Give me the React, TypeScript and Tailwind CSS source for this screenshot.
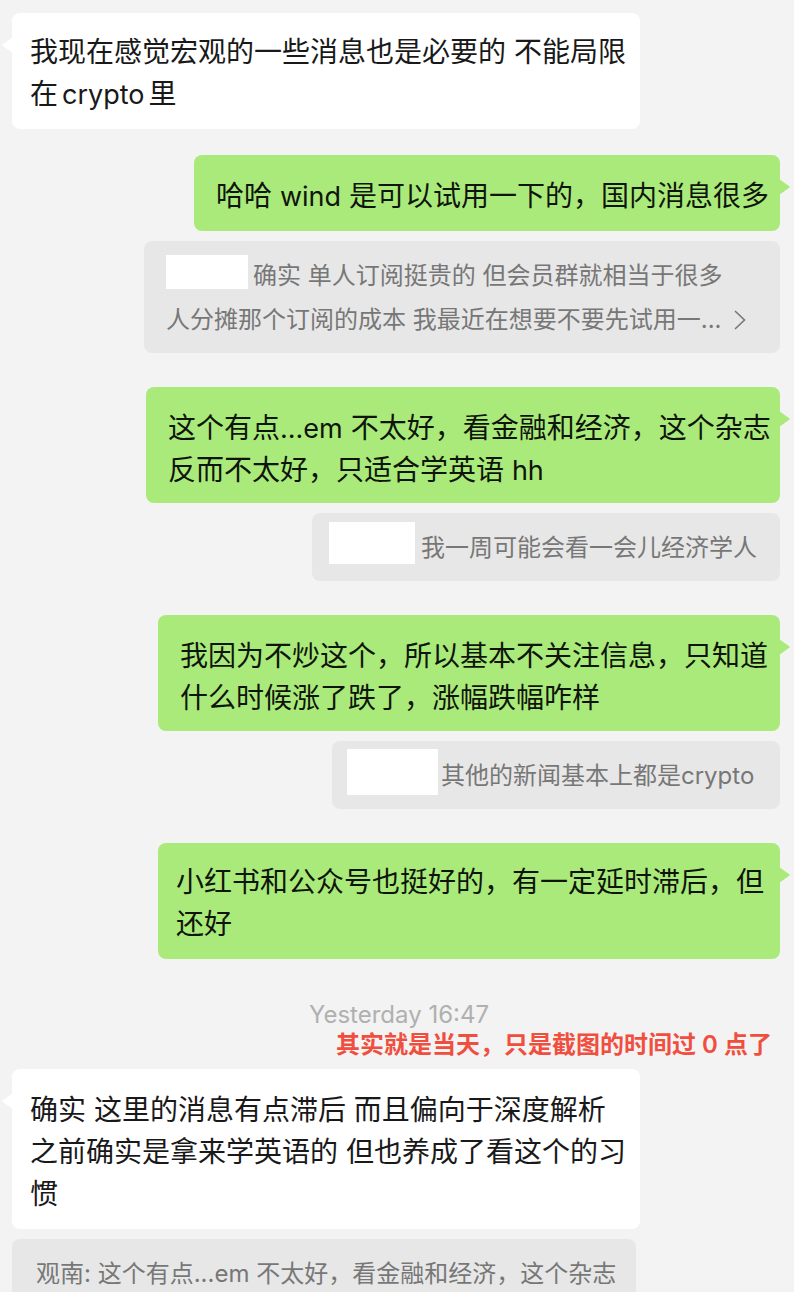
import type { ReactNode } from "react";

function Tail({ side }: { side: "left" | "right" }) {
  return side === "left" ? (
    <svg className="absolute top-6 -left-[10px] h-4 w-[11px] fill-white" viewBox="0 0 11 16" aria-hidden="true">
      <path d="M11 0 0.4 7.5Q0 8 0.4 8.5L11 16Z" />
    </svg>
  ) : (
    <svg className="absolute top-6 -right-[10px] h-4 w-[11px] fill-[#aaea7b]" viewBox="0 0 11 16" aria-hidden="true">
      <path d="M0 0 10.6 7.5Q11 8 10.6 8.5L0 16Z" />
    </svg>
  );
}

/* Latin words sit slightly smaller than the Chinese text around them. */
function Latin({ className = "", children }: { className?: string; children: ReactNode }) {
  return <span className={`text-[27px] leading-none ${className}`}>{children}</span>;
}

function Incoming({ className, lines }: { className: string; lines: ReactNode[] }) {
  return (
    <div className={`relative w-[628px] max-w-full rounded-lg bg-white pl-[18px] text-[28px] leading-[42px] text-[#191919] ${className}`}>
      <Tail side="left" />
      {lines.map((line, i) => (
        <p key={i} className="whitespace-nowrap">{line}</p>
      ))}
    </div>
  );
}

function Outgoing({ className, lines }: { className: string; lines: ReactNode[] }) {
  return (
    <div className={`relative ml-auto max-w-full rounded-lg bg-[#aaea7b] text-[28px] leading-[42px] text-[#0f150b] ${className}`}>
      <Tail side="right" />
      {lines.map((line, i) => (
        <p key={i} className="whitespace-nowrap">{line}</p>
      ))}
    </div>
  );
}

function Quote({ className, children }: { className: string; children: ReactNode }) {
  return (
    <blockquote className={`mt-[10px] max-w-full rounded-lg bg-[#e7e7e7] pb-[11px] text-2xl leading-[44px] whitespace-nowrap text-[#777777] ${className}`}>
      {children}
    </blockquote>
  );
}

export default function App() {
  return (
    <main className="h-screen overflow-hidden bg-[#f3f3f3] pt-[13px] pr-[14px] pl-3 font-[Inter,'Noto_Sans_CJK_SC',sans-serif]" lang="zh-CN">
      <Incoming
        className="pt-[18px] pb-[14px]"
        lines={["我现在感觉宏观的一些消息也是必要的 不能局限", <>在<Latin className="mx-1">crypto</Latin>里</>]}
      />

      <Outgoing
        className="mt-[26px] w-[586px] pt-5 pb-[14px] pl-[22px]"
        lines={[<>哈哈 <Latin>wind</Latin> 是可以试用一下的，国内消息很多</>]}
      />
      <Quote className="ml-auto w-[636px] pl-[22px]">
        <div className="flex items-start gap-[5px]">
          <span className="mt-[14px] h-[34px] w-[82px] bg-white" />
          <p className="pt-[13px]">确实 单人订阅挺贵的 但会员群就相当于很多</p>
        </div>
        <div className="flex items-center gap-3">
          <p>人分摊那个订阅的成本 我最近在想要不要先试用一...</p>
          <button type="button" aria-label="展开">
            <svg className="h-5 w-3" viewBox="0 0 12 20" fill="none" stroke="#777777" strokeWidth="1.6" aria-hidden="true">
              <path d="M1 1 10.5 10 1 19" />
            </svg>
          </button>
        </div>
      </Quote>

      <Outgoing
        className="mt-[34px] w-[634px] pt-5 pb-3 pl-[22px]"
        lines={[
          <>这个有点<Latin>...em</Latin> 不太好，看金融和经济，这个杂志</>,
          <>反而不太好，只适合学英语 <Latin>hh</Latin></>,
        ]}
      />
      <Quote className="ml-auto w-[468px] pl-[17px]">
        <div className="flex items-start gap-[6px]">
          <span className="mt-[9px] h-[42px] w-[86px] bg-white" />
          <p className="pt-[13px]">我一周可能会看一会儿经济学人</p>
        </div>
      </Quote>

      <Outgoing
        className="mt-[34px] w-[622px] pt-5 pb-3 pl-[22px]"
        lines={["我因为不炒这个，所以基本不关注信息，只知道", "什么时候涨了跌了，涨幅跌幅咋样"]}
      />
      <Quote className="ml-auto w-[448px] pl-[15px]">
        <div className="flex items-start gap-[3px]">
          <span className="mt-2 h-[46px] w-[91px] bg-white" />
          <p className="pt-[13px]">其他的新闻基本上都是crypto</p>
        </div>
      </Quote>

      <Outgoing
        className="mt-[34px] w-[622px] pt-[18px] pb-[14px] pl-[18px]"
        lines={["小红书和公众号也挺好的，有一定延时滞后，但", "还好"]}
      />

      <div className="pt-[41px] pb-[9px] text-2xl leading-[30px]">
        <time className="block pl-[6px] text-center text-[#b0b0b0]">Yesterday 16:47</time>
        <p className="pr-2 text-right font-semibold text-[#f04e3e]">其实就是当天，只是截图的时间过 0 点了</p>
      </div>

      <Incoming
        className="pt-5 pb-[14px]"
        lines={[
          "确实 这里的消息有点滞后 而且偏向于深度解析",
          "之前确实是拿来学英语的 但也养成了看这个的习",
          "惯",
        ]}
      />
      <Quote className="w-[624px] pt-[13px] pl-6">
        <p>观南: 这个有点...em 不太好，看金融和经济，这个杂志</p>
      </Quote>
    </main>
  );
}
